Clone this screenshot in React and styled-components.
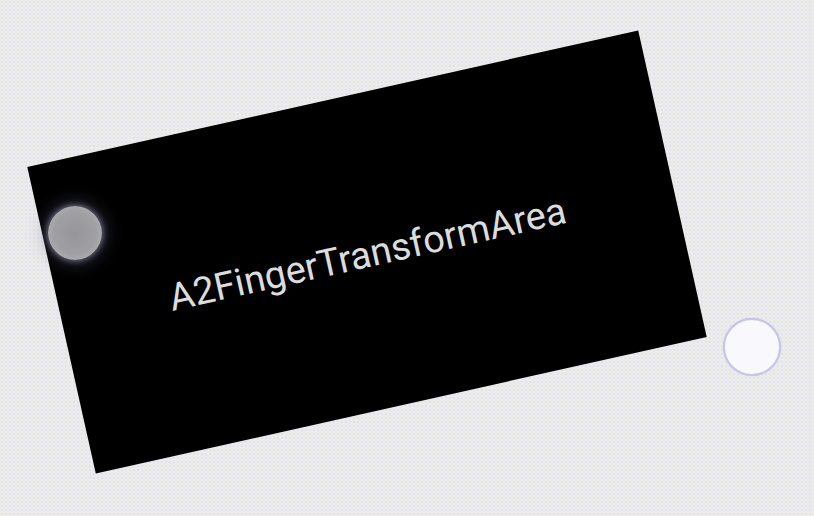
import React from "react";
import styled, { createGlobalStyle } from "styled-components";

const GlobalStyle = createGlobalStyle`
  html, body {
    margin: 0;
    padding: 0;
    width: 100%;
    height: 100%;
    overflow: hidden;
  }
  body {
    background: #ebebee;
    font-family: Roboto, "Liberation Sans", sans-serif;
  }
  #root {
    width: 100%;
    height: 100%;
  }
`;

const Canvas = styled.div`
  position: relative;
  width: 814px;
  height: 516px;
  overflow: hidden;
  background-color: #ebebee;
  background-image: radial-gradient(rgba(220, 220, 245, 0.6) 0.8px, transparent 1px),
    radial-gradient(rgba(240, 240, 215, 0.6) 0.8px, transparent 1px);
  background-size: 4px 4px;
  background-position: 0 0, 2px 2px;
`;

const TransformArea = styled.div`
  position: absolute;
  left: ${(p) => p.$cx - p.$w / 2}px;
  top: ${(p) => p.$cy - p.$h / 2}px;
  width: ${(p) => p.$w}px;
  height: ${(p) => p.$h}px;
  background: #000;
  transform: rotate(${(p) => p.$angle}deg);
  display: flex;
  align-items: center;
  justify-content: center;
`;

const Label = styled.span`
  color: #dcdcde;
  font-family: Roboto, "Liberation Sans", sans-serif;
  font-size: 38px;
  font-weight: 400;
  line-height: 1;
  white-space: nowrap;
  margin-top: 4px;
`;

const TouchPoint = styled.div`
  position: absolute;
  left: ${(p) => p.$x - p.$size / 2}px;
  top: ${(p) => p.$y - p.$size / 2}px;
  width: ${(p) => p.$size}px;
  height: ${(p) => p.$size}px;
  border-radius: 50%;
  box-sizing: border-box;
  ${(p) =>
    p.$active
      ? `
    background: radial-gradient(circle, #96969a 0%, #a0a0a4 55%, #b4b4b8 85%, #bdbdc1 100%);
    box-shadow: 0 0 5px 2px rgba(160, 160, 190, 0.5), 0 0 16px 7px rgba(100, 100, 140, 0.28);
  `
      : `
    background: #f8f8fd;
    border: 2px solid #c6c6e6;
    box-shadow: 0 0 1px rgba(160, 160, 210, 0.6);
  `}
`;

export default function App() {
  return (
    <>
      <GlobalStyle />
      <Canvas>
        <TransformArea $cx={366.5} $cy={252} $w={626} $h={314} $angle={-12.6}>
          <Label>A2FingerTransformArea</Label>
        </TransformArea>
        <TouchPoint $active $x={75} $y={233} $size={54} />
        <TouchPoint $x={752} $y={347} $size={58} />
      </Canvas>
    </>
  );
}
